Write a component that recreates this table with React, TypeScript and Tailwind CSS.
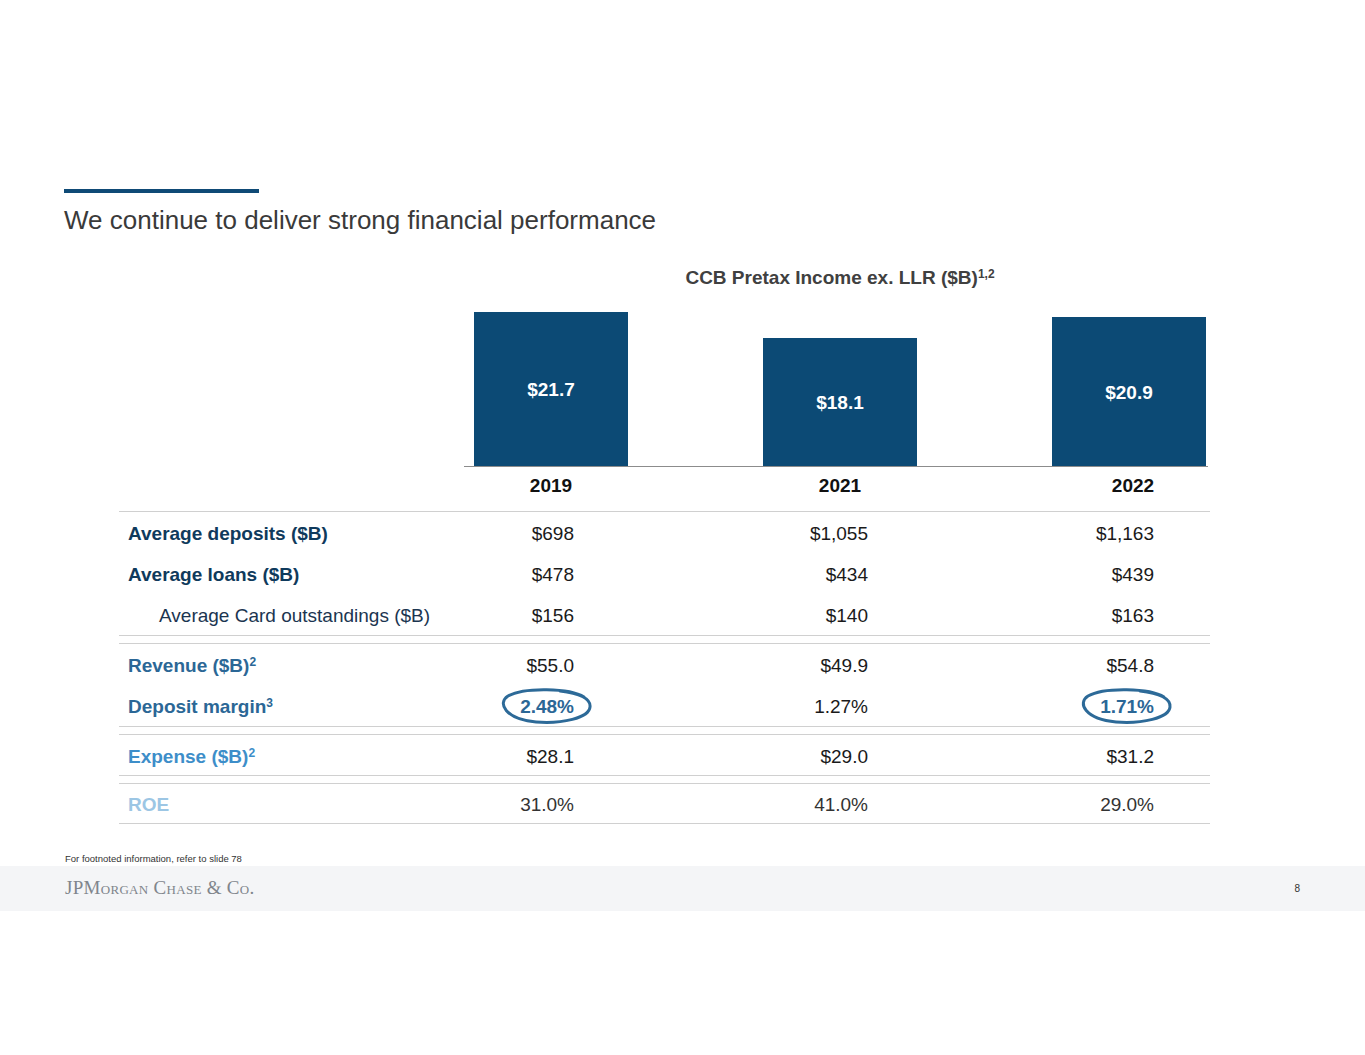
import React from 'react';

type Row = {
  label: string;
  sup?: string;
  labelClass: string;
  indent?: boolean;
  values: string[];
  circled?: boolean[];
  valueClass?: string;
};

const groups: Row[][] = [
  [
    { label: 'Average deposits ($B)', labelClass: 'font-bold text-[#0f3a5c]', values: ['$698', '$1,055', '$1,163'] },
    { label: 'Average loans ($B)', labelClass: 'font-bold text-[#0f3a5c]', values: ['$478', '$434', '$439'] },
    { label: 'Average Card outstandings ($B)', labelClass: 'text-[#1b3550]', indent: true, values: ['$156', '$140', '$163'] },
  ],
  [
    { label: 'Revenue ($B)', sup: '2', labelClass: 'font-bold text-[#2b6796]', values: ['$55.0', '$49.9', '$54.8'] },
    {
      label: 'Deposit margin',
      sup: '3',
      labelClass: 'font-bold text-[#2b6796]',
      values: ['2.48%', '1.27%', '1.71%'],
      circled: [true, false, true],
    },
  ],
  [{ label: 'Expense ($B)', sup: '2', labelClass: 'font-bold text-[#3d8ec9]', values: ['$28.1', '$29.0', '$31.2'] }],
  [{ label: 'ROE', labelClass: 'font-bold text-[#9cc6e4]', values: ['31.0%', '41.0%', '29.0%'], valueClass: 'text-[#333]' }],
];

// row heights differ a little between the groups on the slide
const rowHeights = ['h-[41px]', 'h-[41px]', 'h-[40px]', 'h-[39px]'];

const bars = [
  { year: '2019', value: '$21.7', height: 'h-[154px]', labelPad: 'pb-[65px]' },
  { year: '2021', value: '$18.1', height: 'h-[128px]', labelPad: 'pb-[52px]' },
  { year: '2022', value: '$20.9', height: 'h-[149px]', labelPad: 'pb-[62px]' },
];

const Circled = ({ children }: { children: React.ReactNode }) => (
  <span className="relative inline-block font-bold text-[#2b6796]">
    {children}
    <svg
      className="absolute right-[-18px] top-[-10px] w-[92px] h-[40px] overflow-visible"
      viewBox="0 0 92 40"
      fill="none"
    >
      <path
        d="M84 11 C70 2, 24 1, 8 10 C-3 17, 5 33, 36 36 C62 38, 89 32, 90 21 C91 13, 80 7, 60 5"
        stroke="#2d6a98"
        strokeWidth="3"
        strokeLinecap="round"
      />
    </svg>
  </span>
);

export default function App() {
  return (
    <div className="w-[1365px] h-[1055px] bg-white font-['Liberation_Sans',Arial,sans-serif]">
      <div className="pt-[189px] pl-[64px]">
        <div className="w-[195px] h-[4px] bg-[#0f4a76]" />
        <h1 className="mt-[12px] text-[26px] leading-[30px] text-[#3a3a3a]">
          We continue to deliver strong financial performance
        </h1>
      </div>

      <div className="ml-[464px] w-[744px] mt-[32px]">
        <div className="text-center text-[19px] leading-[22px] font-bold text-[#404040] pl-[8px]">
          CCB Pretax Income ex. LLR ($B)<sup className="text-[12px]">1,2</sup>
        </div>
        <div className="mt-[23px] h-[155px] flex items-end justify-between pl-[10px] pr-[2px] border-b border-[#8c8c8c]">
          {bars.map((b) => (
            <div
              key={b.year}
              className={`w-[154px] ${b.height} ${b.labelPad} bg-[#0c4a75] flex items-end justify-center`}
            >
              <span className="text-white font-bold text-[19px] leading-[22px]">{b.value}</span>
            </div>
          ))}
        </div>
        <div className="flex justify-between pl-[10px] pr-[2px] mt-[8px]">
          {bars.map((b, i) => (
            <div
              key={b.year}
              className={`w-[154px] text-center font-bold text-[19px] leading-[22px] text-[#111] ${i === 2 ? 'pl-[8px]' : ''}`}
            >
              {b.year}
            </div>
          ))}
        </div>
      </div>

      <div className="ml-[119px] w-[1091px] mt-[14px] flex flex-col gap-[7px]">
        {groups.map((rows, gi) => (
          <div key={gi} className="border-t border-b border-[#d0d0d0]">
            {rows.map((r) => (
              <div
                key={r.label}
                className={`grid grid-cols-[281px_174px_294px_286px_56px] ${rowHeights[gi]} pt-[3px] items-center text-[19px] leading-[22px]`}
              >
                <div className={`whitespace-nowrap ${r.indent ? 'pl-[40px]' : 'pl-[9px]'} ${r.labelClass}`}>
                  {r.label}
                  {r.sup && <sup className="text-[12px]">{r.sup}</sup>}
                </div>
                {r.values.map((v, vi) => (
                  <div key={vi} className={`text-right ${r.valueClass ?? 'text-[#1a1a1a]'}`}>
                    {r.circled && r.circled[vi] ? <Circled>{v}</Circled> : v}
                  </div>
                ))}
                <div />
              </div>
            ))}
          </div>
        ))}
      </div>

      <div className="pl-[65px] mt-[29px] text-[9.5px] leading-[12px] text-[#333]">
        For footnoted information, refer to slide 78
      </div>
      <div className="mt-[1px] h-[45px] bg-[#f4f5f7] flex items-center justify-between pl-[65px] pr-[65px]">
        <span className="font-['Liberation_Serif',serif] [font-variant:small-caps] text-[19px] text-[#80858c] tracking-[0.3px]">
          JPMorgan Chase &amp; Co.
        </span>
        <span className="text-[10px] text-[#333]">8</span>
      </div>
    </div>
  );
}
